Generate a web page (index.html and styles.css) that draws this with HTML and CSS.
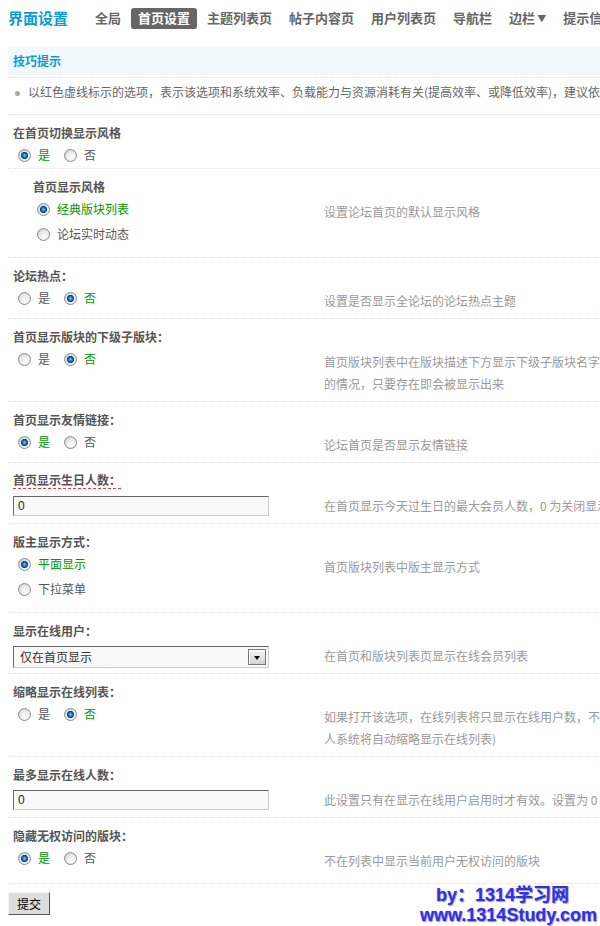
FILE: index.html
```html
<!DOCTYPE html>
<html lang="zh-CN">
<head>
<meta charset="utf-8">
<title>界面设置 - 首页设置</title>
<link rel="stylesheet" href="styles.css">
</head>
<body>
<div class="page">
  <div class="header">
    <h3 class="title">界面设置</h3>
    <ul class="tabs">
      <li>全局</li>
      <li class="active">首页设置</li>
      <li>主题列表页</li>
      <li>帖子内容页</li>
      <li>用户列表页</li>
      <li>导航栏</li>
      <li>边栏<span class="caret">▼</span></li>
      <li>提示信息</li>
      <li>弹出窗口</li>
    </ul>
  </div>

  <div class="hint">
    <div class="hint-title">技巧提示</div>
    <ul class="hint-list">
      <li><span class="dot"></span>以红色虚线标示的选项，表示该选项和系统效率、负载能力与资源消耗有关(提高效率、或降低效率)，建议依据自身服务器情况进行调整。</li>
    </ul>
  </div>

  <form class="settings">
    <div class="setting">
      <div class="label">在首页切换显示风格</div>
      <div class="row">
        <div class="ctrl">
          <ul class="opts">
            <li><label class="opt on"><input class="radio" type="radio" name="s1" checked>是</label></li>
            <li><label class="opt"><input class="radio" type="radio" name="s1">否</label></li>
          </ul>
        </div>
        <div class="desc"></div>
      </div>
    </div>

    <div class="setting sub">
      <div class="label">首页显示风格</div>
      <div class="row">
        <div class="ctrl">
          <ul class="opts vertical">
            <li><label class="opt on"><input class="radio" type="radio" name="s2" checked>经典版块列表</label></li>
            <li><label class="opt"><input class="radio" type="radio" name="s2">论坛实时动态</label></li>
          </ul>
        </div>
        <div class="desc">设置论坛首页的默认显示风格</div>
      </div>
    </div>

    <div class="setting">
      <div class="label">论坛热点：</div>
      <div class="row">
        <div class="ctrl">
          <ul class="opts">
            <li><label class="opt"><input class="radio" type="radio" name="s3">是</label></li>
            <li><label class="opt on"><input class="radio" type="radio" name="s3" checked>否</label></li>
          </ul>
        </div>
        <div class="desc">设置是否显示全论坛的论坛热点主题</div>
      </div>
    </div>

    <div class="setting">
      <div class="label">首页显示版块的下级子版块：</div>
      <div class="row">
        <div class="ctrl">
          <ul class="opts">
            <li><label class="opt"><input class="radio" type="radio" name="s4">是</label></li>
            <li><label class="opt on"><input class="radio" type="radio" name="s4" checked>否</label></li>
          </ul>
        </div>
        <div class="desc">首页版块列表中在版块描述下方显示下级子版块名字和链接（如果存在的话）。注意：本功能不考虑子版块特殊权限<br>的情况，只要存在即会被显示出来</div>
      </div>
    </div>

    <div class="setting">
      <div class="label">首页显示友情链接：</div>
      <div class="row">
        <div class="ctrl">
          <ul class="opts">
            <li><label class="opt on"><input class="radio" type="radio" name="s5" checked>是</label></li>
            <li><label class="opt"><input class="radio" type="radio" name="s5">否</label></li>
          </ul>
        </div>
        <div class="desc">论坛首页是否显示友情链接</div>
      </div>
    </div>

    <div class="setting">
      <div class="label"><span class="dashed">首页显示生日人数：</span></div>
      <div class="row">
        <div class="ctrl">
          <input class="text-input" type="text" value="0">
        </div>
        <div class="desc">在首页显示今天过生日的最大会员人数，0 为关闭显示</div>
      </div>
    </div>

    <div class="setting">
      <div class="label">版主显示方式：</div>
      <div class="row">
        <div class="ctrl">
          <ul class="opts vertical">
            <li><label class="opt on"><input class="radio" type="radio" name="s7" checked>平面显示</label></li>
            <li><label class="opt"><input class="radio" type="radio" name="s7">下拉菜单</label></li>
          </ul>
        </div>
        <div class="desc">首页版块列表中版主显示方式</div>
      </div>
    </div>

    <div class="setting">
      <div class="label">显示在线用户：</div>
      <div class="row">
        <div class="ctrl">
          <div class="select"><span class="select-text">仅在首页显示</span><span class="select-btn"><span class="arrow"></span></span></div>
        </div>
        <div class="desc">在首页和版块列表页显示在线会员列表</div>
      </div>
    </div>

    <div class="setting">
      <div class="label">缩略显示在线列表：</div>
      <div class="row">
        <div class="ctrl">
          <ul class="opts">
            <li><label class="opt"><input class="radio" type="radio" name="s9">是</label></li>
            <li><label class="opt on"><input class="radio" type="radio" name="s9" checked>否</label></li>
          </ul>
        </div>
        <div class="desc">如果打开该选项，在线列表将只显示在线用户数，不显示详细用户列表(在线人数超过 500<br>人系统将自动缩略显示在线列表)</div>
      </div>
    </div>

    <div class="setting">
      <div class="label">最多显示在线人数：</div>
      <div class="row">
        <div class="ctrl">
          <input class="text-input" type="text" value="0">
        </div>
        <div class="desc">此设置只有在显示在线用户启用时才有效。设置为 0 则为不限制</div>
      </div>
    </div>

    <div class="setting last">
      <div class="label">隐藏无权访问的版块：</div>
      <div class="row">
        <div class="ctrl">
          <ul class="opts">
            <li><label class="opt on"><input class="radio" type="radio" name="s11" checked>是</label></li>
            <li><label class="opt"><input class="radio" type="radio" name="s11">否</label></li>
          </ul>
        </div>
        <div class="desc">不在列表中显示当前用户无权访问的版块</div>
      </div>
    </div>

    <div class="submit-row">
      <button class="btn" type="button">提交</button>
    </div>
  </form>

  <div class="watermark">
    <div class="wm-line wm-first">by：1314学习网</div>
    <div class="wm-line">www.1314Study.com</div>
  </div>
</div>
</body>
</html>
```
FILE: styles.css
```css
html {
  margin: 0;
  padding: 0;
  overflow: hidden;
  background: #fff;
}

body {
  margin: 0;
  padding: 0;
  min-height: 926px;
  font-family: "Noto Sans CJK SC", "Noto Sans", sans-serif;
  font-size: 12px;
  line-height: 18px;
  color: #555;
}

ul {
  list-style: none;
  margin: 0;
  padding: 0;
}

.page {
  position: relative;
  width: 900px;
  padding: 8px 0 0 8px;
}

/* header */
.header {
  display: flex;
  align-items: center;
  height: 20px;
  white-space: nowrap;
}

.title {
  margin: 0 20px 0 0;
  font-size: 15px;
  line-height: 20px;
  font-weight: bold;
  color: #0a9ccf;
}

.tabs {
  display: flex;
}

.tabs li {
  padding: 0 7px;
  margin-right: 3px;
  line-height: 20px;
  font-size: 13px;
  font-weight: bold;
  color: #666;
  border-radius: 3px;
}

.tabs li.active {
  background: #666;
  color: #fff;
}

.caret {
  margin-left: 2px;
  font-size: 9px;
  vertical-align: 1px;
}

/* hint */
.hint {
  margin-top: 19px;
}

.hint-title {
  height: 28px;
  line-height: 28px;
  margin-bottom: 2px;
  padding-left: 5px;
  background: #f2f9fd;
  color: #0a9ccf;
  font-weight: bold;
}

.hint-list {
  padding: 3px 5px 11px;
  border-top: 1px dotted #cfe5f7;
  line-height: 22px;
  color: #666;
  white-space: nowrap;
}

.dot {
  display: inline-block;
  width: 5px;
  height: 5px;
  margin: 0 8px 0 2px;
  border-radius: 50%;
  background: #aaa;
  vertical-align: middle;
}

/* settings */
.setting {
  border-top: 1px dotted #cfe5f7;
}

.label {
  padding: 9px 5px 0;
  line-height: 18px;
  font-weight: bold;
  color: #555;
}

.dashed {
  display: inline-block;
  vertical-align: top;
  line-height: 16px;
  border-bottom: 1px dashed #f33;
}

.row {
  display: grid;
  grid-template-columns: 311px auto;
}

.setting.last .row {
  padding-bottom: 5px;
}

.ctrl {
  padding: 2px 5px;
}

.sub .label {
  padding-left: 25px;
}

.sub .ctrl {
  padding-left: 24px;
}

.desc {
  padding: 5px 5px 6px;
  line-height: 22px;
  color: #999;
  white-space: nowrap;
}

/* radios */
.opts {
  display: flex;
}

.opts.vertical {
  flex-direction: column;
  padding-bottom: 7px;
}

.opt {
  display: flex;
  align-items: center;
  height: 22px;
  padding-left: 5px;
  margin-right: 9px;
  color: #555;
}

.opts.vertical .opt {
  margin: 0 0 3px;
}

.opt.on {
  color: #090;
}

.radio {
  -webkit-appearance: none;
  appearance: none;
  flex: none;
  box-sizing: border-box;
  width: 13px;
  height: 13px;
  margin: 0 7px 0 0;
  border: 1px solid #8c8c8c;
  border-radius: 50%;
  background: radial-gradient(circle at 60% 65%, #fdfdfd 0, #ececec 45%, #c4c4c4 100%);
}

.radio:checked {
  background:
    radial-gradient(circle at 50% 50%, #8ad4ff 0, #2a86cf 1.4px, #0b4a86 3px, #0b4a86 3.3px, rgba(230,230,230,0) 3.9px),
    radial-gradient(circle at 60% 65%, #fdfdfd 0, #ececec 45%, #c4c4c4 100%);
}

/* inputs */
.text-input {
  display: block;
  box-sizing: border-box;
  width: 256px;
  height: 20px;
  margin: 4px 0 0;
  padding: 0 4px;
  border: 1px solid;
  border-color: #666 #ccc #ccc #666;
  background: #f9f9f9;
  font-family: "Liberation Sans", "Noto Sans CJK SC", sans-serif;
  font-size: 12px;
  color: #223;
  outline: none;
}

.select {
  display: flex;
  align-items: center;
  box-sizing: border-box;
  width: 256px;
  height: 22px;
  margin-top: 4px;
  border: 1px solid;
  border-color: #666 #ccc #ccc #666;
  background: #f9f9f9;
  color: #333;
}

.select-text {
  flex: 1;
  padding-left: 6px;
}

.select-btn {
  display: flex;
  align-items: center;
  justify-content: center;
  width: 16px;
  height: 14px;
  margin-right: 2px;
  border: 1px solid #777;
  background: linear-gradient(#f6f6f6, #d2d2d2);
  box-shadow: inset 1px 1px 0 #fff;
}

.arrow {
  width: 0;
  height: 0;
  margin-top: 2px;
  border-top: 4px solid #000;
  border-left: 3.5px solid transparent;
  border-right: 3.5px solid transparent;
}

/* submit */
.submit-row {
  padding-top: 8px;
  border-top: 1px dotted #cfe5f7;
}

.btn {
  box-sizing: border-box;
  width: 42px;
  height: 23px;
  padding: 0;
  border: 1px solid;
  border-color: #f4f4f4 #555 #555 #f4f4f4;
  background: #ddd;
  font-family: "Noto Sans CJK SC", sans-serif;
  font-size: 12px;
  color: #000;
}

/* watermark overlay */
.watermark {
  position: absolute;
  top: 885px;
  left: 420px;
  font-family: "Liberation Sans", "Noto Sans CJK SC", sans-serif;
  font-size: 18px;
  line-height: 20px;
  font-weight: bold;
  color: #2f30ee;
  text-shadow: 1px 1px 1px #9a9a9a, 0 0 2px #d0d0d0;
  white-space: nowrap;
}

.wm-first {
  padding-left: 16px;
}
```
